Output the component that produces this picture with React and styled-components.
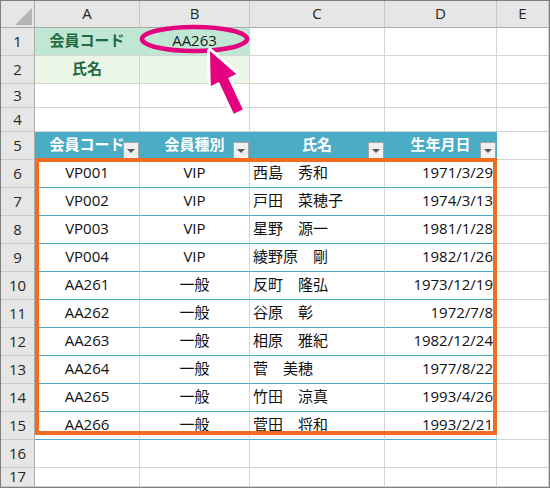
import React from "react";
import styled, { createGlobalStyle } from "styled-components";

const Global = createGlobalStyle`
  html, body { margin: 0; padding: 0; background: #ffffff; }
  body { font-family: "Open Sans", "Noto Sans CJK JP", sans-serif; }
`;

const COLS = "34px 105px 110px 135px 112px 1fr";
const BLUE = "#4bacc6";
const GRID = "#d4d4d4";

const Sheet = styled.div`
  position: relative;
  width: 550px;
  height: 488px;
  box-sizing: border-box;
  border: 1px solid #7f7f7f;
  background: #ffffff;
  overflow: hidden;
  display: flex;
  flex-direction: column;
`;

const Row = styled.div`
  display: grid;
  grid-template-columns: ${COLS};
  height: ${(p) => p.$h}px;
  flex: none;
`;

const Cell = styled.div`
  position: relative;
  box-sizing: border-box;
  display: flex;
  align-items: center;
  justify-content: ${(p) =>
    p.$align === "left" ? "flex-start" : p.$align === "right" ? "flex-end" : "center"};
  padding: 0 ${(p) => (p.$align === "center" || !p.$align ? 0 : 3)}px 2px;
  background: ${(p) => p.$bg || "#ffffff"};
  border-right: 1px solid ${(p) => p.$vline || GRID};
  border-bottom: 1px solid ${(p) => p.$hline || GRID};
  font-family: "Open Sans", "Noto Sans CJK JP", sans-serif;
  font-size: 15px;
  line-height: 1;
  font-weight: ${(p) => (p.$bold ? 700 : 400)};
  color: ${(p) => p.$color || "#111111"};
  white-space: nowrap;
`;

const HeadCell = styled.div`
  box-sizing: border-box;
  display: flex;
  align-items: center;
  justify-content: center;
  padding-bottom: 1px;
  background: #e6e6e6;
  border-right: 1px solid #c8c8c8;
  border-bottom: 1px solid #c8c8c8;
  font-family: "Open Sans", sans-serif;
  font-size: 15px;
  line-height: 1;
  color: #262626;
`;

const ColHeadCell = styled(HeadCell)`
  border-bottom: 1px solid #ababab;
`;

const RowNum = styled(HeadCell)`
  border-right: 1px solid #ababab;
`;

const Corner = styled.div`
  position: relative;
  box-sizing: border-box;
  background: #e6e6e6;
  border-right: 1px solid #ababab;
  border-bottom: 1px solid #ababab;
  &::after {
    content: "";
    position: absolute;
    right: 2px;
    bottom: 2px;
    width: 0;
    height: 0;
    border-left: 17px solid transparent;
    border-bottom: 17px solid #b5b5b5;
  }
`;

const FilterButton = styled.div`
  position: absolute;
  right: 0;
  bottom: 0;
  width: 16px;
  height: 17px;
  box-sizing: border-box;
  border: 1px solid #a6a6a6;
  background: #f0f0f0;
  display: flex;
  align-items: center;
  justify-content: center;
  &::after {
    content: "";
    width: 0;
    height: 0;
    border-left: 4px solid transparent;
    border-right: 4px solid transparent;
    border-top: 4px solid #595959;
    margin-top: 1px;
  }
`;

const Highlight = styled.div`
  position: absolute;
  left: 34px;
  top: 157px;
  width: 462px;
  height: 277px;
  box-sizing: border-box;
  border: 4px solid #f36c21;
  pointer-events: none;
`;

const Overlay = styled.svg`
  position: absolute;
  left: -1px;
  top: -1px;
  width: 550px;
  height: 488px;
  pointer-events: none;
`;

const data = [
  ["VP001", "VIP", "西島　秀和", "1971/3/29"],
  ["VP002", "VIP", "戸田　菜穂子", "1974/3/13"],
  ["VP003", "VIP", "星野　源一", "1981/1/28"],
  ["VP004", "VIP", "綾野原　剛", "1982/1/26"],
  ["AA261", "一般", "反町　隆弘", "1973/12/19"],
  ["AA262", "一般", "谷原　彰", "1972/7/8"],
  ["AA263", "一般", "相原　雅紀", "1982/12/24"],
  ["AA264", "一般", "菅　美穂", "1977/8/22"],
  ["AA265", "一般", "竹田　涼真", "1993/4/26"],
  ["AA266", "一般", "菅田　将和", "1993/2/21"],
];

const GREEN_TEXT = "#1f6a42";

export default function App() {
  return (
    <>
      <Global />
      <Sheet>
        <Row $h={27}>
          <Corner />
          {["A", "B", "C", "D", "E"].map((c) => (
            <ColHeadCell key={c}>{c}</ColHeadCell>
          ))}
        </Row>

        <Row $h={28}>
          <RowNum>1</RowNum>
          <Cell $bg="#bfe7d3" $bold $color={GREEN_TEXT}>会員コード</Cell>
          <Cell $bg="#bfe7d3" $color="#1a1a1a">AA263</Cell>
          <Cell />
          <Cell />
          <Cell />
        </Row>
        <Row $h={28}>
          <RowNum>2</RowNum>
          <Cell $bg="#ebf6e7" $bold $color={GREEN_TEXT}>氏名</Cell>
          <Cell $bg="#ebf6e7" />
          <Cell />
          <Cell />
          <Cell />
        </Row>
        {[3, 4].map((n) => (
          <Row $h={24} key={n}>
            <RowNum>{n}</RowNum>
            <Cell />
            <Cell />
            <Cell />
            <Cell />
            <Cell />
          </Row>
        ))}

        <Row $h={28}>
          <RowNum>5</RowNum>
          {["会員コード", "会員種別", "氏名", "生年月日"].map((h) => (
            <Cell key={h} $bg={BLUE} $vline={BLUE} $hline={BLUE} $bold $color="#ffffff">
              {h}
              <FilterButton />
            </Cell>
          ))}
          <Cell />
        </Row>

        {data.map((r, i) => (
          <Row $h={28} key={r[0]}>
            <RowNum>{i + 6}</RowNum>
            <Cell $hline={BLUE}>{r[0]}</Cell>
            <Cell $hline={BLUE}>{r[1]}</Cell>
            <Cell $hline={BLUE} $align="left">{r[2]}</Cell>
            <Cell $hline={BLUE} $align="right">{r[3]}</Cell>
            <Cell />
          </Row>
        ))}

        <Row $h={28}>
          <RowNum>16</RowNum>
          <Cell />
          <Cell />
          <Cell />
          <Cell />
          <Cell />
        </Row>
        <Row $h={19}>
          <RowNum>17</RowNum>
          <Cell />
          <Cell />
          <Cell />
          <Cell />
          <Cell />
        </Row>

        <Highlight />

        <Overlay viewBox="0 0 550 488">
          <ellipse
            cx="194.5"
            cy="39"
            rx="52.5"
            ry="12"
            fill="none"
            stroke="#e4007f"
            strokeWidth="4.5"
          />
          <g transform="translate(210 51) rotate(-25)">
            <polygon
              points="0,0 -14,32 -5,32 -5,67 5,67 5,32 14,32"
              fill="#e4007f"
              stroke="#ffffff"
              strokeWidth="6"
              strokeLinejoin="round"
              paintOrder="stroke"
            />
          </g>
        </Overlay>
      </Sheet>
    </>
  );
}
